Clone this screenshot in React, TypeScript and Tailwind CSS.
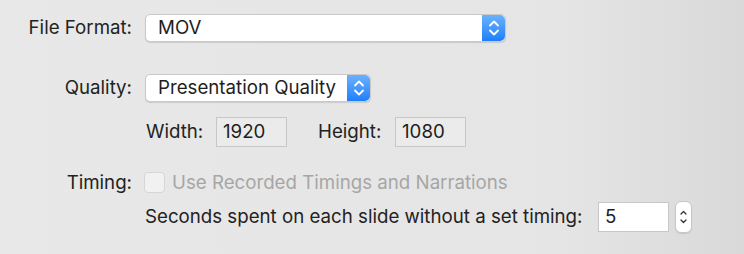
import React from 'react';

const font = { fontFamily: 'Inter, "Liberation Sans", sans-serif' };

// blue double-chevron used in popups
const BlueArrows = ({ w }: { w: string }) => (
  <div className={`${w} h-full rounded-r-[5px] bg-gradient-to-b from-[#69b1fb] to-[#1b7ffb] flex items-center justify-center`}>
    <svg width="12" height="18" viewBox="0 0 12 18" fill="none" stroke="white" strokeWidth="1.8" strokeLinecap="round" strokeLinejoin="round">
      <path d="M2 6.5 L6 2.5 L10 6.5" />
      <path d="M2 11.5 L6 15.5 L10 11.5" />
    </svg>
  </div>
);

const Popup = ({ value, width }: { value: string; width: string }) => (
  <div className={`${width} h-[28px] flex items-stretch bg-white rounded-[5px] border border-[#c9c9c9] shadow-[0_1px_1px_rgba(0,0,0,0.12)]`}>
    <div className="flex-1 flex items-center pl-[12px] text-[#1e1e1e]">{value}</div>
    <BlueArrows w="w-[23px]" />
  </div>
);

const Field = ({ value, dim }: { value: string; dim?: boolean }) => (
  <div className={`w-[71px] h-[30px] flex items-center pl-[6px] border border-[#c7c7c7] ${dim ? 'bg-[#ebebeb]' : 'bg-white'} text-[#1e1e1e]`}>
    {value}
  </div>
);

const Label = ({ children }: { children: React.ReactNode }) => (
  <div className="w-[132px] text-right text-[#222]">{children}</div>
);

export default function App() {
  return (
    <div
      className="w-[744px] h-[254px] bg-gradient-to-r from-[#e8e8e8] via-[#e5e5e5] via-75% to-[#d9d9d9] text-[18.7px] leading-[22px] overflow-hidden"
      style={font}
    >
      <div className="flex flex-col pt-[14px]">
        <div className="flex items-center gap-[13px] h-[28px]">
          <Label>File Format:</Label>
          <Popup value="MOV" width="w-[361px]" />
        </div>

        <div className="flex items-center gap-[13px] h-[28px] mt-[32px]">
          <Label>Quality:</Label>
          <Popup value="Presentation Quality" width="w-[226px]" />
        </div>

        <div className="flex items-center h-[30px] mt-[15px] pl-[146px] text-[#222]">
          <span className="w-[70px]">Width:</span>
          <Field value="1920" dim />
          <span className="ml-[31px] w-[77px]">Height:</span>
          <Field value="1080" dim />
        </div>

        <div className="flex items-center gap-[12px] h-[21px] mt-[25px]">
          <Label>Timing:</Label>
          <div className="flex items-center gap-[7px]">
            <div className="w-[21px] h-[21px] rounded-[4px] border border-[#d6d6d6] bg-[#f1f1f1]" />
            <span className="text-[#a6a6a6]">Use Recorded Timings and Narrations</span>
          </div>
        </div>

        <div className="flex items-center h-[32px] mt-[8px] pl-[145px] text-[#222]">
          <span className="w-[453px]">Seconds spent on each slide without a set timing:</span>
          <div className="w-[71px] h-[30px] flex items-center pl-[6px] bg-white border border-[#c7c7c7] text-[#1e1e1e]">5</div>
          <div className="ml-[6px] w-[17px] h-[32px] rounded-[6px] bg-white border border-[#c7c7c7] shadow-[0_1px_1px_rgba(0,0,0,0.1)] flex items-center justify-center">
            <svg width="9" height="20" viewBox="0 0 9 20" fill="none" stroke="#333" strokeWidth="1.3" strokeLinecap="round" strokeLinejoin="round">
              <path d="M2 7 L4.5 4.5 L7 7" />
              <path d="M2 13 L4.5 15.5 L7 13" />
            </svg>
          </div>
        </div>
      </div>
    </div>
  );
}
